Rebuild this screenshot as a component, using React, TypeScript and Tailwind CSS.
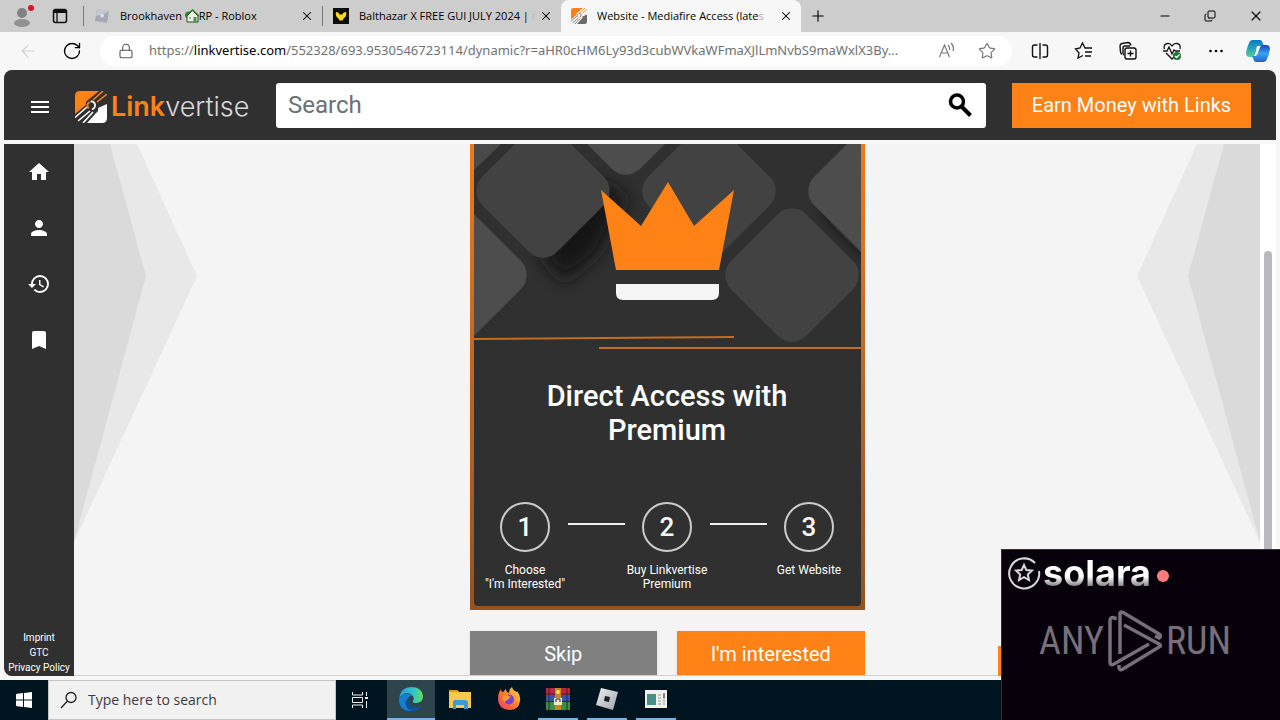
import type { ReactNode } from "react";
import { ArrowLeft, Copy, Lock, Minus, Plus, RotateCw, Star, X } from "lucide-react";
import { MdBookmark, MdHistory, MdHome, MdMenu, MdPerson } from "react-icons/md";

const uiFont = "font-['Open_Sans','Noto_Sans',sans-serif]";

function LinkvertiseMark({ className, light = "#ffffff" }: { className: string; light?: string }) {
  return (
    <svg viewBox="0 0 32 32" className={className} fill="none" aria-hidden>
      <path d="M5 0h19L13 9q-3 2-2 5L0 23V5q0-5 5-5Z" fill="#ff8216" />
      <path d="M32 13v14q0 5-5 5H12l9-10q3-2 2-5Z" fill={light} />
      <path d="M18 9 28 0M22 11 32 3" stroke="#ff8216" strokeWidth="1.600" />
      <path d="M0 26.500 12 16M3 30l12-10" stroke={light} strokeWidth="1.600" />
      <path d="m8 32 10-11" stroke={light} strokeWidth="1.600" />
      <path d="M13.500 17.500Q11 13 14.500 11" stroke="#ff8216" strokeWidth="1.800" />
      <path d="M15.500 10.500q3.500-.5 4.500 3 .5 3.500-3 5" stroke={light} strokeWidth="1.800" />
    </svg>
  );
}

function RobloxTile({ className }: { className: string }) {
  return (
    <svg viewBox="0 0 24 24" className={className} aria-hidden>
      <defs>
        <linearGradient id="silver" x1="0" y1="0" x2="1" y2="1">
          <stop offset="0" stopColor="#f1f3f5" />
          <stop offset="1" stopColor="#9da1a6" />
        </linearGradient>
      </defs>
      <path d="M6 1 23 5 18 23 1 18Z" fill="url(#silver)" />
      <path d="m10 9 5 1-1 5-5-1Z" fill="#1b2227" />
    </svg>
  );
}

function RobloxFavicon() {
  return (
    <svg viewBox="0 0 16 16" className="h-4 w-4 shrink-0" aria-hidden>
      <path d="m3 1 12 2-2 12-12-2Z" fill="#a3aab1" />
      <path d="m3 1 12 2-7 4-6 1Z" fill="#c3c8cd" />
      <path d="m7 6 3 .5-.5 3-3-.5Z" fill="#dfe2e5" />
    </svg>
  );
}

function House() {
  return (
    <svg viewBox="0 0 14 14" className="h-3.5 w-3.5 shrink-0" aria-hidden>
      <circle cx="3.500" cy="6" r="3.500" fill="#2c8a2f" />
      <path d="M2 7 7.500 1.500 13 7v6H2Z" fill="#f3f0df" stroke="#224d22" />
      <path d="M1 7 7.500 1 14 7" fill="none" stroke="#2e7b32" strokeWidth="1.500" />
      <path d="M8.500 8h3v5h-3z" fill="#4b8c58" />
      <path d="M4 8h2v2H4z" fill="#88b9c8" />
    </svg>
  );
}

function Tab({ icon, active, children }: { icon: ReactNode; active?: boolean; children: ReactNode }) {
  return (
    <div
      className={`flex h-8 items-center gap-2.5 pr-2 pl-2.5 ${
        active ? "w-[240px] rounded-t-lg bg-[#f7f7f7]" : "w-[238px]"
      }`}
    >
      {icon}
      <span className="flex min-w-0 flex-1 items-center text-[11px] whitespace-nowrap text-black">
        {children}
      </span>
      <button type="button" aria-label="Close tab">
        <X className="h-3.5 w-3.5" strokeWidth={1.8} />
      </button>
    </div>
  );
}

function TabStrip() {
  return (
    <div className={`flex h-8 shrink-0 items-center bg-[#cdcdcd] ${uiFont}`}>
      <button type="button" aria-label="Profile" className="ml-3 h-6 w-6">
        <svg viewBox="0 0 24 24" aria-hidden>
          <circle cx="10" cy="9" r="5" fill="#818181" />
          <ellipse cx="10" cy="19" rx="8" ry="4" fill="#919191" />
          <circle cx="19" cy="4" r="3" fill="#dc1420" />
        </svg>
      </button>
      <button type="button" aria-label="Tab actions" className="ml-4 h-4 w-4">
        <svg viewBox="0 0 16 16" fill="none" stroke="#111" aria-hidden>
          <rect x="1.500" y="1.500" width="13" height="13" rx="2" strokeWidth="1.500" />
          <path d="M1.500 3.500h13" strokeWidth="3" />
          <path d="M5 4v10" strokeWidth="1.300" />
        </svg>
      </button>
      <span className="ml-[15px] h-5 w-px bg-[#777]" />
      <Tab icon={<RobloxFavicon />}>
        Brookhaven&nbsp;
        <House />
        RP - Roblox
      </Tab>
      <span className="h-5 w-px bg-[#777]" />
      <Tab
        icon={
          <svg viewBox="0 0 16 16" className="h-4 w-4 shrink-0" aria-hidden>
            <path d="M0 0h16v16H0z" fill="#0c0c08" />
            <path d="M3 4q3 0 4 3l1-1 1 1q1-3 4-3 1 4-2 6l-2 3-1-1-1 1-2-3Q2 8 3 4Z" fill="#f5dc13" />
          </svg>
        }
      >
        <span>
          Balthazar X FREE GUI JULY 2024 | <span className="text-[#bbb]">r</span>
        </span>
      </Tab>
      <Tab active icon={<LinkvertiseMark className="h-4 w-4 shrink-0" light="#6a6868" />}>
        Website - Mediafire Access (late<span className="text-[#aaa]">s</span>
      </Tab>
      <button type="button" aria-label="New tab" className="ml-2">
        <Plus className="h-[18px] w-[18px]" strokeWidth={1.5} />
      </button>
      <div className="mr-4 ml-auto flex items-center gap-8">
        <button type="button" aria-label="Minimize">
          <Minus className="h-3.5 w-3.5" strokeWidth={1.8} />
        </button>
        <button type="button" aria-label="Restore">
          <Copy className="h-3 w-3 -scale-x-100 rotate-180" strokeWidth={2} />
        </button>
        <button type="button" aria-label="Close">
          <X className="h-4 w-4" strokeWidth={1.6} />
        </button>
      </div>
    </div>
  );
}

function AddressBar() {
  return (
    <div className={`flex h-[38px] shrink-0 items-center ${uiFont}`}>
      <button type="button" aria-label="Back" className="ml-[18px] text-[#cfcfcf]">
        <ArrowLeft className="h-5 w-5" strokeWidth={1.3} />
      </button>
      <button type="button" aria-label="Refresh" className="ml-6">
        <RotateCw className="h-5 w-5" strokeWidth={1.6} />
      </button>
      <div className="ml-[18px] flex h-[30px] min-w-0 flex-1 items-center rounded-full bg-white pr-4 pl-[18px]">
        <Lock className="h-4 w-4 shrink-0 text-[#555]" strokeWidth={1.6} />
        <span className="ml-[15px] flex-1 font-['Noto_Sans',sans-serif] text-[13px] whitespace-nowrap text-[#717171]">
          https://<span className="text-black">linkvertise.com</span>
          /552328/693.9530546723114/dynamic?r=aHR0cHM6Ly93d3cubWVkaWFmaXJlLmNvbS9maWxlX3By...
        </span>
        <button type="button" aria-label="Read aloud" className="ml-4">
          <svg viewBox="0 0 18 18" className="h-[18px] w-[18px]" fill="none" stroke="#777" strokeWidth="1.200" aria-hidden>
            <path d="M1.500 15 6.500 3l5 12M3.500 11h6M10 3q2 2 1.500 5M13 1q3.500 4 2 8" />
          </svg>
        </button>
        <button type="button" aria-label="Add to favorites" className="ml-[22px]">
          <Star className="h-[18px] w-[18px] text-[#777]" strokeWidth={1.6} />
        </button>
      </div>
      <div className="mr-2.5 ml-[18px] flex items-center gap-6">
        <button type="button" aria-label="Split screen">
          <svg viewBox="0 0 20 20" className="h-5 w-5" fill="none" stroke="#111" strokeWidth="1.400" aria-hidden>
            <path d="M7.500 4H4.500q-2 0-2 2v8q0 2 2 2h3M12.500 4h3q2 0 2 2v8q0 2-2 2h-3M10 2v16" />
          </svg>
        </button>
        <button type="button" aria-label="Favorites">
          <svg viewBox="0 0 20 20" className="h-5 w-5" fill="none" stroke="#111" strokeWidth="1.300" aria-hidden>
            <path d="M13 7h-2L8.500 2 6 7 1.500 8l3.500 4-1 5 5-2.500M12.500 7H18M11 11h7M11 15h6" />
          </svg>
        </button>
        <button type="button" aria-label="Collections">
          <svg viewBox="0 0 20 20" className="h-5 w-5" fill="none" stroke="#111" strokeWidth="1.400" aria-hidden>
            <path d="M4 13q-1 0-1.500-2L2 5q0-2 2-2.500l6-1q2 0 3 3" />
            <path d="M6 14q-1-.5-1-2V7q0-2 2-2h5" />
            <rect x="7" y="7" width="11" height="11" rx="2" />
            <path d="M12.500 9.500v6M9.500 12.500h6" />
          </svg>
        </button>
        <button type="button" aria-label="Browser essentials">
          <svg viewBox="0 0 20 20" className="h-5 w-5" fill="none" stroke="#111" strokeWidth="1.300" aria-hidden>
            <path d="M2.500 8Q1 3 5.500 2.500 8 2 10 5q2-3 5-2.500Q19 3 18 8M4 12l6 6 2-2M1 10h4l2-4 3 7 2-4 1.500 1H18" />
            <circle cx="15" cy="15" r="4" fill="#18772b" stroke="none" />
            <path d="m13 15 1.500 1.500 3-3" stroke="#fff" />
          </svg>
        </button>
        <button type="button" aria-label="Settings and more">
          <svg viewBox="0 0 20 20" className="h-5 w-5" aria-hidden>
            <circle cx="4.500" cy="10" r="1.300" />
            <circle cx="10" cy="10" r="1.300" />
            <circle cx="15.500" cy="10" r="1.300" />
          </svg>
        </button>
        <button type="button" aria-label="Copilot" className="-ml-1">
          <svg viewBox="0 0 24 24" className="h-6 w-6" aria-hidden>
            <defs>
              <linearGradient id="copilotA" x1="0" y1="0" x2="0" y2="1">
                <stop offset="0" stopColor="#0877c8" />
                <stop offset="0.55" stopColor="#27a9b5" />
                <stop offset="1" stopColor="#55d28c" />
              </linearGradient>
              <linearGradient id="copilotB" x1="0" y1="0" x2="0" y2="1">
                <stop offset="0" stopColor="#1746b0" />
                <stop offset="0.5" stopColor="#3aa2f1" />
                <stop offset="1" stopColor="#1f63d6" />
              </linearGradient>
            </defs>
            <path d="M7 1h7q2 0 3 4l1 2h-3q-2 0-3 3l-2 6q-1 2-3 2H4q-4 0-4-4 1-6 3-10 1-3 4-3Z" fill="url(#copilotA)" />
            <path d="M17 23h-7q-2 0-3-4l-1-2h3q2 0 3-3l2-6q1-2 3-2h3q4 0 4 4-1 6-3 10-1 3-4 3Z" fill="url(#copilotB)" />
            <path d="M11 7h4q-2 1-3 4l-2 6H8q1-1 2-5Z" fill="#fff" />
          </svg>
        </button>
      </div>
    </div>
  );
}

function SiteHeader() {
  return (
    <header className="flex h-[70px] shrink-0 items-center rounded-t-lg bg-[#303030] pr-[25px] pl-6">
      <button type="button" aria-label="Menu" className="mt-1 text-white">
        <MdMenu className="h-6 w-6" />
      </button>
      <a href="#" className="mt-1 ml-[23px] flex w-[175px] items-center gap-1">
        <LinkvertiseMark className="h-8 w-8 shrink-0" />
        <span className="font-['Inter',sans-serif] text-[27px] leading-8 font-light text-[#d9d9d9]">
          <span className="font-semibold text-[#ff8216]">Link</span>vertise
        </span>
      </a>
      <div className="ml-[26px] flex h-[45px] min-w-0 flex-1 items-center rounded-[3px] bg-white pr-3 pl-3">
        <input
          type="text"
          placeholder="Search"
          aria-label="Search"
          className="min-w-0 flex-1 text-2xl outline-none placeholder:text-[#6c6f73]"
        />
        <button type="button" aria-label="Search">
          <svg viewBox="0 0 28 28" className="h-7 w-7" fill="none" stroke="#000" strokeWidth="3.500" aria-hidden>
            <circle cx="11" cy="10.500" r="6.500" />
            <path d="m15.500 15.500 9 9" strokeWidth="4" />
          </svg>
        </button>
      </div>
      <button type="button" className="ml-[26px] h-[45px] w-[239px] bg-[#ff8216] text-xl text-white">
        Earn Money with Links
      </button>
    </header>
  );
}

const navItems = [
  { label: "Home", icon: MdHome },
  { label: "Profile", icon: MdPerson },
  { label: "History", icon: MdHistory },
  { label: "Bookmarks", icon: MdBookmark },
];

function Sidebar() {
  return (
    <nav className="flex w-[70px] shrink-0 flex-col items-center rounded-bl-lg bg-[#303030] text-white">
      {navItems.map(({ label, icon: Icon }) => (
        <a key={label} href="#" aria-label={label} className="flex h-14 items-center">
          <Icon className="h-6 w-6" />
        </a>
      ))}
      <div className="mt-auto mb-px flex flex-col items-center text-[10px] leading-[15px] whitespace-nowrap">
        <a href="#">Imprint</a>
        <a href="#">GTC</a>
        <a href="#">Privacy Policy</a>
      </div>
    </nav>
  );
}

function SideArrow({ className }: { className: string }) {
  return (
    <svg viewBox="0 0 123 400" className={className} aria-hidden>
      <path d="M0 0h63l60 132L0 398Z" fill="#e8e8e8" />
      <path d="M0 0h36l36 132L0 398Z" fill="#dadada" />
    </svg>
  );
}

function CrownArt() {
  return (
    <svg viewBox="0 0 387 208" className="block w-full" aria-hidden>
      <defs>
        <filter id="soft" x="-50%" y="-50%" width="200%" height="200%">
          <feGaussianBlur stdDeviation="9" />
        </filter>
      </defs>
      <path d="M0 0h387v208H0z" fill="#303030" />
      <path d="M66 110 120 36l34 16-30 58-34 28Z" fill="#161616" filter="url(#soft)" />
      <path d="m350 66 50 50V84l-30-40Z" fill="#161616" filter="url(#soft)" />
      <path d="M0 0h27L0 26Z" fill="#4a4a4a" />
      <rect x="16" y="-6" width="106" height="106" rx="20" transform="rotate(45 69 47)" fill="#424242" />
      <rect x="99" y="-89" width="106" height="106" rx="20" transform="rotate(45 152 -36)" fill="#4d4d4d" />
      <rect x="182" y="-6" width="106" height="106" rx="20" transform="rotate(45 235 47)" fill="#424242" />
      <rect x="265" y="78" width="106" height="106" rx="20" transform="rotate(45 318 131)" fill="#424242" />
      <rect x="348" y="-6" width="106" height="106" rx="20" transform="rotate(45 401 47)" fill="#4d4d4d" />
      <rect x="-67" y="78" width="106" height="106" rx="20" transform="rotate(45 -14 131)" fill="#4d4d4d" />
      <path d="m127 46 40 36 27-44 26 44 40-36-15 80H142Z" fill="#ff8216" />
      <path d="M142 140h103v9q0 7-7 7h-89q-7 0-7-7Z" fill="#f5f5f5" />
      <path d="m0 194 260-2v2L0 196ZM125 203h262v2H125Z" fill="#c46d1e" />
    </svg>
  );
}

const steps = [
  ["Choose", "\"I'm Interested\""],
  ["Buy Linkvertise", "Premium"],
  ["Get Website"],
];

function PremiumCard() {
  return (
    <section className="bg-linear-to-b from-[#f07a18] to-[#94531f] px-1 pb-1">
      <div className="rounded-b bg-[#303030] pb-[15px] text-center text-white">
        <CrownArt />
        <h1 className="mx-auto mt-[27px] w-[300px] text-[29px] leading-[34px] font-medium">
          Direct Access with Premium
        </h1>
        <ol className="mt-[55px] flex justify-center">
          {steps.map((lines, i) => (
            <li key={lines[0]} className="flex">
              {i > 0 ? <span className="mt-[21px] h-0.5 w-[57px] bg-[#eee]" /> : null}
              <div className="flex w-[85px] flex-col items-center">
                <span className="flex h-[50px] w-[50px] items-center justify-center rounded-full border-2 border-[#ccc] text-[26px] font-medium">
                  {i + 1}
                </span>
                <p className="mt-[11px] text-xs leading-[14px] whitespace-nowrap">
                  {lines.map((line) => (
                    <span key={line} className="block">
                      {line}
                    </span>
                  ))}
                </p>
              </div>
            </li>
          ))}
        </ol>
      </div>
    </section>
  );
}

function SolaraPanel() {
  return (
    <aside className="absolute right-0 bottom-0 h-[171px] w-[279px] border-t border-l border-[#333] bg-[#08000b] pt-1.5 pl-[5px]">
      <div className="flex h-[34px] items-center">
        <svg viewBox="0 0 34 34" className="h-[34px] w-[34px]" fill="none" stroke="#d8d8d8" strokeWidth="2" aria-hidden>
          <path d="M28 7A15 15 0 1 0 32 15" />
          <path d="m17 9 2.300 5 5.700.6-4.200 3.900 1.200 5.500-5-2.800-5 2.800 1.200-5.500L9 14.600l5.700-.6Z" />
        </svg>
        <span className="ml-0.5 bg-linear-to-b from-white from-60% to-[#777] to-90% bg-clip-text font-['Inter',sans-serif] text-[36px] leading-[36px] font-bold text-transparent">
          solara
        </span>
        <span className="mt-1.5 ml-1.5 h-3 w-3 rounded-full bg-[#ff7b7d]" />
      </div>
      <div className="mt-5 mr-[49px] ml-8 flex items-center justify-between font-['Roboto_Condensed','Liberation_Sans_Narrow','Roboto',sans-serif] text-[38px] leading-[62px] text-[#77707a]">
        <span>ANY</span>
        <svg viewBox="0 0 54 62" className="h-[62px] w-[54px] shrink-0" fill="none" stroke="#77707a" strokeWidth="3.500" aria-hidden>
          <path d="M12 44V3q1-2 4 0l35 21q3 2 0 4l-4-2" />
          <path d="M7 10V8q-5-2-5 3v41q0 4 4 2l35-20" />
          <path d="m16 15 35 19q3 2 0 3L15 59q-3 2-4-1v-3" />
        </svg>
        <span>RUN</span>
      </div>
    </aside>
  );
}

function EdgeIcon() {
  return (
    <svg viewBox="0 0 24 24" className="h-6 w-6" aria-hidden>
      <defs>
        <linearGradient id="edgeTop" x1="0" y1="0" x2="1" y2="0">
          <stop offset="0" stopColor="#249dd6" />
          <stop offset="0.6" stopColor="#30c5c9" />
          <stop offset="1" stopColor="#67dc57" />
        </linearGradient>
      </defs>
      <path d="M0 11Q2 0 12 0q11 0 12 9 0 7-7 7-4 0-3-2 2-3-1-6-6-5-13 3Z" fill="url(#edgeTop)" />
      <path d="M0 12Q3 6 9 7q3 0 5 2-4-1-5 3-1 6 5 9 4 1 8-2-4 5-10 5Q0 24 0 12Z" fill="#157fd0" />
      <path d="M9 11q-4 4-2 8 2 4 6 5 6-.5 9-5-4 2-8 1-5-2-5-9Z" fill="#0d529c" />
    </svg>
  );
}

const apps: { name: string; state: "active" | "open" | "closed"; icon: ReactNode }[] = [
  { name: "Microsoft Edge", state: "active", icon: <EdgeIcon /> },
  {
    name: "File Explorer",
    state: "closed",
    icon: (
      <svg viewBox="0 0 24 24" className="h-6 w-6" aria-hidden>
        <path d="M1 3h8l2 2h12v16H1Z" fill="#f7ca4e" />
        <path d="M1 3h8l2 2H1Z" fill="#db9c21" />
        <path d="M6 13h12l2 2v7h-4v-4H8v4H5v-7Z" fill="#3d9bd1" />
      </svg>
    ),
  },
  {
    name: "Firefox",
    state: "closed",
    icon: (
      <svg viewBox="0 0 24 24" className="h-6 w-6" aria-hidden>
        <defs>
          <linearGradient id="fox" x1="1" y1="0" x2="0" y2="1">
            <stop offset="0" stopColor="#ffe34a" />
            <stop offset="0.5" stopColor="#ff7b2d" />
            <stop offset="1" stopColor="#f0356a" />
          </linearGradient>
        </defs>
        <path d="M4 2q0 3 2 3l3-3q0 3 3 4 0-4 3-6 1 4 5 5v-1q4 5 3 10-1 9-11 9Q1 22 1 12q0-6 3-10Z" fill="url(#fox)" />
        <circle cx="12" cy="12.500" r="5" fill="#7544cf" />
        <path d="M6 8q4-1 6 1l2 1q-3 1-3 3-3 0-3 3-4-4-2-8Z" fill="#ff982e" />
      </svg>
    ),
  },
  {
    name: "WinRAR",
    state: "open",
    icon: (
      <svg viewBox="0 0 24 24" className="h-6 w-6" aria-hidden>
        <path d="M0 1h24v7H0z" fill="#b62a3a" />
        <path d="M0 8h24v7H0z" fill="#3159b3" />
        <path d="M0 15h24v8H0z" fill="#3c9140" />
        <path d="M0 7h24M0 14.500h24M3 1v22M21 1v22" stroke="#3b2330" />
        <path d="M9 1h6v22H9z" fill="#c98720" />
        <path d="M8 11h8v7H8z" fill="#f4ead0" />
        <path d="M10 15v-3h4v3" fill="none" stroke="#222" />
        <circle cx="12" cy="5" r="2" fill="#ffd561" />
      </svg>
    ),
  },
  { name: "Roblox", state: "open", icon: <RobloxTile className="h-6 w-6" /> },
  {
    name: "Setup",
    state: "open",
    icon: (
      <svg viewBox="0 0 24 24" className="h-6 w-6" aria-hidden>
        <path d="M1 3h22v18H1z" fill="#f1f1ee" />
        <path d="M3 7h9v11H3z" fill="#468f84" />
        <path d="M14 8h3M14 11h3M14 14h3M14 17h3" stroke="#999" />
        <path d="M19 7h2v11h-2z" fill="#c7cbca" />
        <path d="M20 6v5" stroke="#26384f" />
      </svg>
    ),
  },
];

const underline = { active: "w-full bg-[#76b4e5]", open: "w-10 bg-[#76b4e5]", closed: "w-0" } as const;

function Taskbar() {
  return (
    <footer className={`flex h-10 shrink-0 bg-[#001520] ${uiFont}`}>
      <button type="button" aria-label="Start" className="flex w-12 items-center justify-center">
        <svg viewBox="0 0 16 16" className="h-4 w-4" fill="#fff" aria-hidden>
          <path d="m0 2 7-1v6.500H0ZM8 1l8-1v7.500H8ZM0 8.500h7V15l-7-1ZM8 8.500h8V16l-8-1Z" />
        </svg>
      </button>
      <label className="flex w-72 items-center gap-2.5 border border-[#c4c4c4] bg-[#f1f1f1] pl-[11px]">
        <svg viewBox="0 0 18 18" className="h-[18px] w-[18px]" fill="none" stroke="#222" strokeWidth="1.300" aria-hidden>
          <circle cx="11" cy="6.500" r="5" />
          <path d="M7.500 10 1 17" />
        </svg>
        <input
          type="text"
          placeholder="Type here to search"
          aria-label="Type here to search"
          className="min-w-0 flex-1 text-sm outline-none placeholder:text-[#3b3b3b]"
        />
      </label>
      <button type="button" aria-label="Task view" className="flex w-12 items-center justify-center">
        <svg viewBox="0 0 16 16" className="h-4 w-4" fill="none" stroke="#eee" aria-hidden>
          <path d="M.5 0v3h10V0M.5 16v-3h10v3M.5 5.500h10v5H.5ZM14.500 0v4M14.500 9v7" />
          <path d="M13 5h3v2h-3z" fill="#eee" stroke="none" />
        </svg>
      </button>
      <div className="ml-[3px] flex gap-px">
        {apps.map((app) => (
          <button
            key={app.name}
            type="button"
            aria-label={app.name}
            className={`flex w-12 flex-col items-center ${app.state === "active" ? "bg-[#2e454e]" : ""}`}
          >
            <span className="flex flex-1 items-center">{app.icon}</span>
            <span className={`h-0.5 ${underline[app.state]}`} />
          </button>
        ))}
      </div>
    </footer>
  );
}

export default function App() {
  return (
    <div className="relative flex h-screen flex-col overflow-hidden bg-[#f7f7f7] font-['Roboto',sans-serif]">
      <TabStrip />
      <AddressBar />
      <div className="mx-1 mb-1 flex min-h-0 flex-1 flex-col">
        <SiteHeader />
        <div className="flex min-h-0 flex-1 pt-1">
          <Sidebar />
          <main className="flex min-w-0 flex-1 justify-between overflow-hidden border-b border-[#d0d0d0] bg-[#f4f4f4]">
            <SideArrow className="h-[400px] w-[123px] shrink-0" />
            <div className="w-[395px] shrink-0">
              <PremiumCard />
              <div className="mt-[21px] grid grid-cols-2 gap-5 text-xl text-white">
                <button type="button" className="h-[45px] bg-[#808080] shadow">
                  Skip
                </button>
                <button type="button" className="h-[45px] bg-[#ff8216] shadow">
                  I'm interested
                </button>
              </div>
            </div>
            <SideArrow className="h-[400px] w-[123px] shrink-0 -scale-x-100" />
          </main>
          <div className="w-4 shrink-0 bg-white px-1 pt-[107px]">
            <div className="h-full rounded-t-full bg-[#b9b8bd]" />
          </div>
        </div>
      </div>
      <Taskbar />
      <button
        type="button"
        aria-label="Open chat"
        className="absolute right-4 bottom-11 h-[30px] w-[266px] bg-[#ff8216]"
      />
      <SolaraPanel />
    </div>
  );
}
